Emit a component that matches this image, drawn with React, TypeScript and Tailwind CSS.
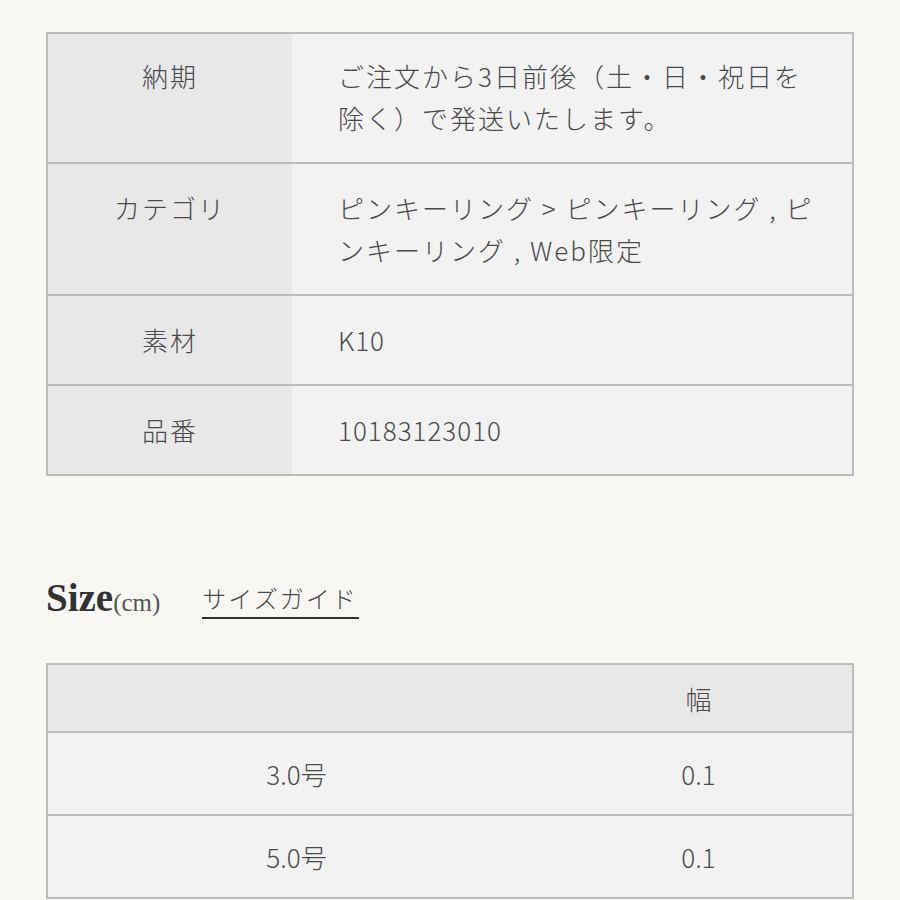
const specs = [
  { label: "納期", value: "ご注文から3日前後（土・日・祝日を除く）で発送いたします。", num: false },
  { label: "カテゴリ", value: "ピンキーリング > ピンキーリング , ピンキーリング , Web限定", num: false },
  { label: "素材", value: "K10", num: true },
  { label: "品番", value: "10183123010", num: true },
];

const sizes = [
  { name: "3.0号", width: "0.1" },
  { name: "5.0号", width: "0.1" },
];

const App = () => {
  return (
    <div className="w-[900px] h-[900px] overflow-hidden bg-[#f8f7f4] text-[#4a4a4a] font-light font-['Noto_Sans_CJK_JP','Noto_Sans',sans-serif]">
      <div className="pt-[32px] px-[46px]">
        <table className="w-[808px] border-collapse border-2 border-[#bcbcbc] text-[26px] leading-[42px]">
          <tbody>
            {specs.map((s, i) => (
              <tr key={s.label} className="border-b-2 border-[#bcbcbc]">
                <th className={`w-[245px] bg-[#e8e8e8] font-light text-center align-top pb-[23px] tracking-[2px] ${i === 0 ? "pt-[21px]" : "pt-[23px]"}`}>
                  {s.label}
                </th>
                <td
                  className={`bg-[#f2f2f2] pl-[46px] pr-[36px] pb-[23px] align-top ${i === 0 ? "pt-[21px]" : "pt-[23px]"} ${s.num ? "tracking-[1px]" : "tracking-[2px]"}`}
                >
                  {s.value}
                </td>
              </tr>
            ))}
          </tbody>
        </table>

        <div className="mt-[102px] flex items-end">
          <div className="font-['Liberation_Serif',serif] text-[#333] leading-none">
            <span className="text-[39px] font-semibold">Size</span>
            <span className="text-[25px] text-[#555] font-normal">(cm)</span>
          </div>
          <a className="ml-[42px] mb-[-2px] text-[24px] leading-[36px] tracking-[2px] border-b-2 border-[#333] pb-[1px] pr-[1px]">サイズガイド</a>
        </div>

        <table className="mt-[46px] w-[808px] border-collapse border-2 border-[#bcbcbc] text-[26px]">
          <thead>
            <tr className="border-b-2 border-[#bcbcbc] bg-[#e8e8e8]">
              <th className="w-[498px] h-[68px]"></th>
              <th className="font-light text-center">幅</th>
            </tr>
          </thead>
          <tbody>
            {sizes.map((r) => (
              <tr key={r.name} className="border-b-2 border-[#bcbcbc] bg-[#f2f2f2]">
                <td className="h-[83px] text-center">{r.name}</td>
                <td className="text-center">{r.width}</td>
              </tr>
            ))}
          </tbody>
        </table>
      </div>
    </div>
  );
};

export default App;
